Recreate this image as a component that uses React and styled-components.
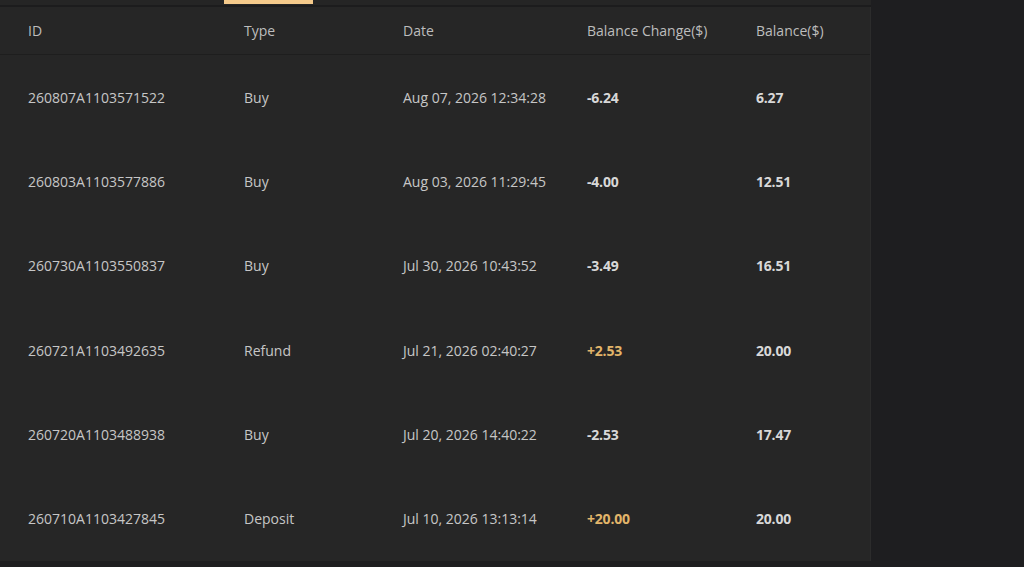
import React from 'react';
import styled, {createGlobalStyle} from 'styled-components';

const GlobalStyle = createGlobalStyle`
  html, body {
    margin: 0;
    padding: 0;
    background: #1e1e20;
    font-family: 'Open Sans', 'Noto Sans', sans-serif;
  }
`;

const Page = styled.div`
  width: 871px;
  background: #1e1e20;
`;

const Tabs = styled.div`
  height: 5px;
  background: #252525;
  border-bottom: 2px solid #1c1c1d;
  display: flex;
  align-items: flex-start;
  padding-left: 224px;
`;

const ActiveTab = styled.div`
  width: 89px;
  height: 4px;
  background: #f5ca8b;
`;

const Table = styled.div`
  background: #262626;
  border-right: 1px solid #2c2c2c;
`;

const Row = styled.div`
  display: grid;
  grid-template-columns: 216px 159px 184px 169px 1fr;
  align-items: center;
  padding-left: 28px;
  height: ${p => (p.$head ? '47px' : '84.3px')};
  border-bottom: ${p => (p.$head ? '1px solid #1e1e1e' : 'none')};
  font-size: 14px;
`;

const Head = styled.div`
  color: #bdbdbd;
  margin-top: -1px;
`;

const Cell = styled.div`
  color: #c6c6c6;
`;

const Amount = styled.div`
  font-weight: 700;
  letter-spacing: -0.2px;
  color: ${p => (p.$plus ? '#e2b56a' : '#d8d8d8')};
`;

const Bottom = styled.div`
  height: 6px;
  background: #1e1e20;
`;

const rows = [
  ['260807A1103571522', 'Buy', 'Aug 07, 2026 12:34:28', '-6.24', '6.27'],
  ['260803A1103577886', 'Buy', 'Aug 03, 2026 11:29:45', '-4.00', '12.51'],
  ['260730A1103550837', 'Buy', 'Jul 30, 2026 10:43:52', '-3.49', '16.51'],
  ['260721A1103492635', 'Refund', 'Jul 21, 2026 02:40:27', '+2.53', '20.00'],
  ['260720A1103488938', 'Buy', 'Jul 20, 2026 14:40:22', '-2.53', '17.47'],
  ['260710A1103427845', 'Deposit', 'Jul 10, 2026 13:13:14', '+20.00', '20.00'],
];

const App = () => (
  <Page>
    <GlobalStyle />
    <Tabs>
      <ActiveTab />
    </Tabs>
    <Table>
      <Row $head>
        <Head>ID</Head>
        <Head>Type</Head>
        <Head>Date</Head>
        <Head>Balance Change($)</Head>
        <Head>Balance($)</Head>
      </Row>
      {rows.map(r => (
        <Row key={r[0]}>
          <Cell>{r[0]}</Cell>
          <Cell>{r[1]}</Cell>
          <Cell>{r[2]}</Cell>
          <Amount $plus={r[3].startsWith('+')}>{r[3]}</Amount>
          <Amount>{r[4]}</Amount>
        </Row>
      ))}
    </Table>
    <Bottom />
  </Page>
);

export default App;
